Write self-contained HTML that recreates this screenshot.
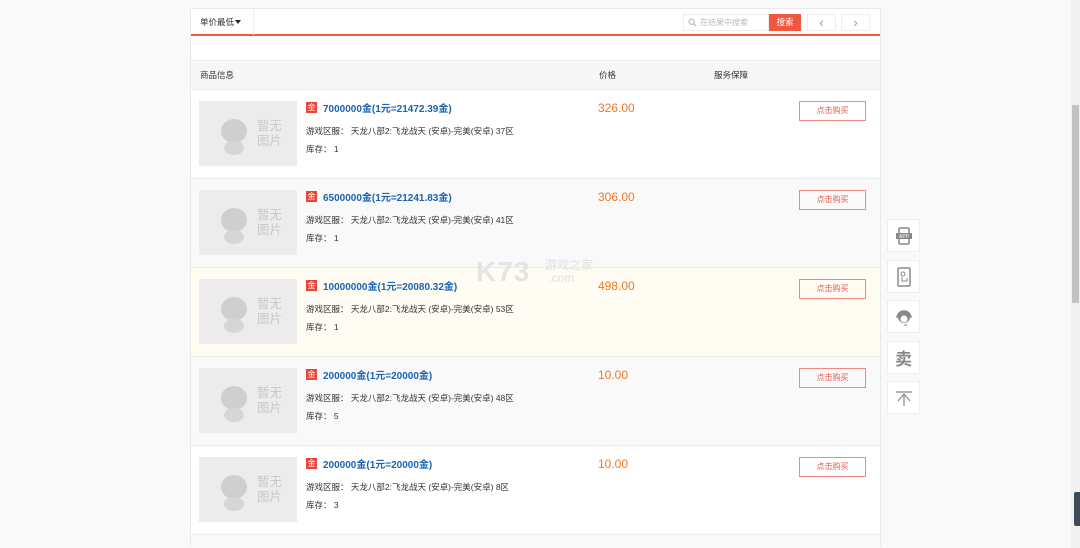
<!DOCTYPE html>
<html><head><meta charset="utf-8"><style>
*{margin:0;padding:0;box-sizing:border-box}
html,body{width:1080px;height:548px;overflow:hidden;background:#f9f9f9;font-family:"Liberation Sans","Noto Sans CJK SC",sans-serif;color:#333;font-size:9px;position:relative}
.wrap{position:absolute;left:190px;top:8px;width:691px;height:538px;overflow:hidden;background:#fff;border:1px solid #e8e8e8;border-bottom:none}
.bar{height:27px;border-bottom:2px solid #f05a3e;position:relative}
.sort{position:absolute;left:0;top:0;width:63px;height:26px;border-right:1px solid #eee;line-height:26px;padding-left:9px;font-size:8.5px}
.sort:after{content:"";position:absolute;left:44px;top:11px;border:3.5px solid transparent;border-top:4px solid #222}
.srch{position:absolute;left:492px;top:5px;width:86px;height:17px;border:1px solid #eee;color:#bbb;font-size:8px;line-height:15px;padding-left:16px}
.srch svg{position:absolute;left:4px;top:3px}
.sbtn{position:absolute;left:578px;top:5px;width:32px;height:17px;background:#f0573e;color:#fff;font-size:8.5px;line-height:17px;text-align:center}
.nav{position:absolute;top:5px;width:29px;height:17px;border:1px solid #eee;color:#999;text-align:center;line-height:15px;font-size:13px}
.hdr{position:absolute;top:51px;left:0;width:689px;height:30px;background:#f7f7f7;border-top:1px solid #ececec;border-bottom:1px solid #ececec;line-height:28px;font-size:8.5px}
.hdr span{position:absolute}
.row{position:absolute;left:0;width:689px;height:89px;border-bottom:1px solid #ececec}
.img{position:absolute;left:8px;top:11px;width:98px;height:65px;background:#ececec}
.img .t{position:absolute;left:58px;top:18px;color:#c8c8c8;font-size:12.5px;line-height:15px}
.img .h{position:absolute;left:22px;top:18px;width:26px;height:24px;border-radius:50%;background:#cfcfcf}
.img .b{position:absolute;left:25px;top:40px;width:20px;height:14px;border-radius:50%;background:#d6d6d6}
.bd{position:absolute;left:115px;top:12px;width:11px;height:11px;background:#e8463a;color:#fff;font-size:8px;line-height:11px;text-align:center}
.tt{position:absolute;left:132px;top:10px;color:#1a64b5;font-weight:bold;font-size:10px}
.a{position:absolute;left:115px;top:35px;font-size:8.5px}
.k{position:absolute;left:115px;top:53px;font-size:8.5px}
.p{position:absolute;left:407px;top:11px;color:#f07a26;font-size:12px}
.btn{position:absolute;left:608px;top:11px;width:67px;height:20px;border:1px solid #f08a80;color:#e85a4a;font-size:8px;line-height:18px;text-align:center}
.side{position:absolute;left:887px;width:33px;height:33px;background:#fff;border:1px solid #eee;display:flex;align-items:center;justify-content:center;color:#888}
.sb{position:absolute;left:1071px;top:0;width:9px;height:548px;background:#f1f1f1}
.th{position:absolute;left:1072px;top:105px;width:7px;height:198px;background:#c1c1c1}
.wm{position:absolute;left:476px;top:256px;color:#e4e4e4;font-size:28px;font-weight:bold;letter-spacing:1px}
.wm2{position:absolute;left:545px;top:259px;color:#e0e0e0;font-size:12px;line-height:13px}
</style></head><body>
<div class="wrap">
 <div class="bar">
  <div class="sort">单价最低</div>
  <div class="srch"><svg width="9" height="9" viewBox="0 0 10 10"><circle cx="4" cy="4" r="3" fill="none" stroke="#aaa"/><path d="M6.5 6.5L9 9" stroke="#aaa"/></svg>在结果中搜索</div>
  <div class="sbtn">搜索</div>
  <div class="nav" style="left:616px">&lsaquo;</div>
  <div class="nav" style="left:650px">&rsaquo;</div>
 </div>
 <div class="hdr"><span style="left:9px">商品信息</span><span style="left:408px">价格</span><span style="left:523px">服务保障</span></div>

 <div class="row" style="top:81px;background:#fff"><div class="img"><div class="h"></div><div class="b"></div><div class="t">暂无<br>图片</div></div><div class="bd">金</div><div class="tt">7000000金(1元=21472.39金)</div><div class="a">游戏区服： 天龙八部2:飞龙战天 (安卓)-完美(安卓) 37区</div><div class="k">库存： 1</div><div class="p">326.00</div><div class="btn">点击购买</div></div>
 <div class="row" style="top:170px;background:#f9f9f9"><div class="img"><div class="h"></div><div class="b"></div><div class="t">暂无<br>图片</div></div><div class="bd">金</div><div class="tt">6500000金(1元=21241.83金)</div><div class="a">游戏区服： 天龙八部2:飞龙战天 (安卓)-完美(安卓) 41区</div><div class="k">库存： 1</div><div class="p">306.00</div><div class="btn">点击购买</div></div>
 <div class="row" style="top:259px;background:#fffcf4"><div class="img"><div class="h"></div><div class="b"></div><div class="t">暂无<br>图片</div></div><div class="bd">金</div><div class="tt">10000000金(1元=20080.32金)</div><div class="a">游戏区服： 天龙八部2:飞龙战天 (安卓)-完美(安卓) 53区</div><div class="k">库存： 1</div><div class="p">498.00</div><div class="btn">点击购买</div></div>
 <div class="row" style="top:348px;background:#f9f9f9"><div class="img"><div class="h"></div><div class="b"></div><div class="t">暂无<br>图片</div></div><div class="bd">金</div><div class="tt">200000金(1元=20000金)</div><div class="a">游戏区服： 天龙八部2:飞龙战天 (安卓)-完美(安卓) 48区</div><div class="k">库存： 5</div><div class="p">10.00</div><div class="btn">点击购买</div></div>
 <div class="row" style="top:437px;background:#fff"><div class="img"><div class="h"></div><div class="b"></div><div class="t">暂无<br>图片</div></div><div class="bd">金</div><div class="tt">200000金(1元=20000金)</div><div class="a">游戏区服： 天龙八部2:飞龙战天 (安卓)-完美(安卓) 8区</div><div class="k">库存： 3</div><div class="p">10.00</div><div class="btn">点击购买</div></div>
 <div class="row" style="top:526px;height:12px;overflow:hidden;background:#f9f9f9;border-bottom:none"><div class="img"></div><div class="bd">金</div><div class="btn"></div></div>
</div>
<div class="wm">K73</div><div class="wm2">游戏之家<br>&nbsp;.com</div>

<div class="side" style="top:219px"><svg width="18" height="18" viewBox="0 0 18 18"><rect x="4" y="1" width="10" height="16" rx="1" fill="none" stroke="#888" stroke-width="1.5"/><rect x="1" y="6" width="16" height="6" fill="#888"/><text x="9" y="11" font-size="5" fill="#fff" text-anchor="middle" font-family="Liberation Sans">APP</text></svg></div>
<div class="side" style="top:260px"><svg width="14" height="20" viewBox="0 0 14 20"><rect x="1" y="1" width="12" height="18" rx="1" fill="none" stroke="#888" stroke-width="1.5"/><circle cx="6" cy="7" r="2" fill="none" stroke="#888"/><path d="M5 10v4h5v-3" fill="none" stroke="#888"/></svg></div>
<div class="side" style="top:300px"><svg width="18" height="18" viewBox="0 0 18 18"><circle cx="9" cy="9" r="6" fill="#888"/><path d="M2 10a7 7 0 0 1 14 0" fill="none" stroke="#888" stroke-width="1.5"/><circle cx="9" cy="11" r="3.5" fill="#fff"/><path d="M9 17h3" stroke="#888"/></svg></div>
<div class="side" style="top:341px;font-size:17px;font-weight:bold;color:#888">卖</div>
<div class="side" style="top:381px"><svg width="18" height="18" viewBox="0 0 18 18"><path d="M1 3h16M9 5v12M9 5L3 12M9 5l6 7" fill="none" stroke="#888" stroke-width="1.2"/></svg></div>

<div class="sb"></div><div class="th"></div>
<div style="position:absolute;left:1074px;top:492px;width:6px;height:34px;background:#3d4a5a;border-radius:2px 0 0 2px"></div>
</body></html>
